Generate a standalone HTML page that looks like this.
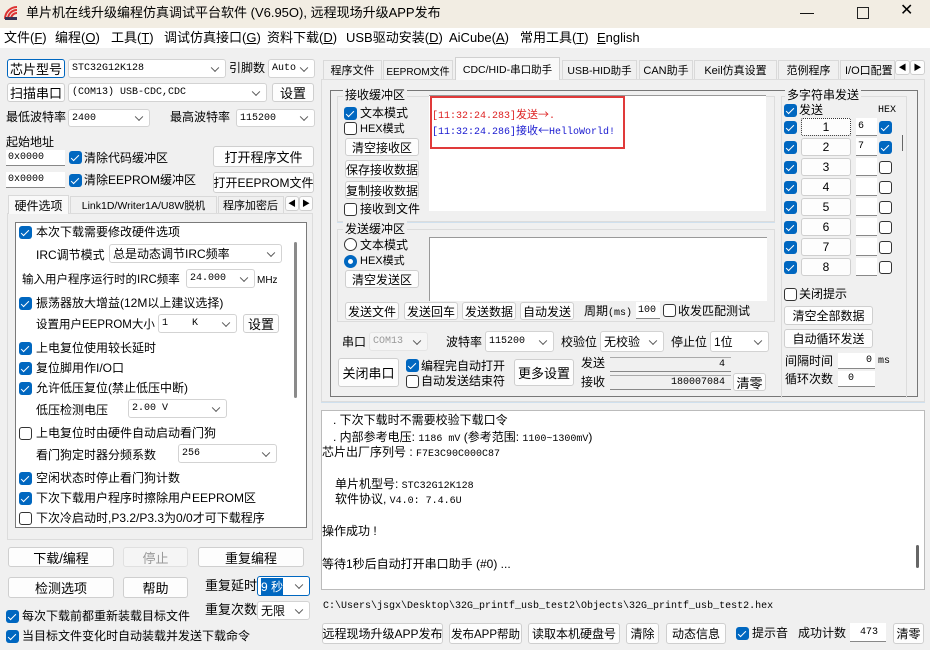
<!DOCTYPE html>
<html><head><meta charset="utf-8"><style>
*{margin:0;padding:0}
body{width:930px;height:650px;overflow:hidden;background:#f0f0f0;font-family:"Liberation Sans","Noto Sans CJK SC",sans-serif;font-size:12px;color:#000;position:relative}
.a{position:absolute}
.t{position:absolute;white-space:nowrap;line-height:16px}
.m{font-family:"Liberation Mono","Noto Sans CJK SC",monospace;font-size:10px}
.b{position:absolute;background:#fdfdfd;border:1px solid #cfcfcf;border-radius:3px;box-sizing:border-box;display:flex;align-items:center;justify-content:center;white-space:nowrap;overflow:hidden}
.s{position:absolute;background:#fff;border:1px solid #d3d3d3;border-radius:3px;box-sizing:border-box;padding-left:3px;display:flex;align-items:center;white-space:nowrap}
.s::after{content:"";position:absolute;right:7px;top:50%;width:5px;height:5px;border-right:1px solid #555;border-bottom:1px solid #555;transform:translateY(-70%) rotate(45deg)}
.i{position:absolute;background:#fff;border-bottom:1px solid #888;box-sizing:border-box;display:flex;align-items:center;white-space:nowrap;padding-left:2px}
.c{position:absolute;width:13px;height:13px;background:#0067c0;border-radius:3px;box-sizing:border-box}
.c::after{content:"";position:absolute;left:4px;top:1.5px;width:3px;height:7px;border-right:1.5px solid #fff;border-bottom:1.5px solid #fff;transform:rotate(45deg)}
.u{position:absolute;width:13px;height:13px;background:#fff;border:1px solid #333;border-radius:3px;box-sizing:border-box}
.r{position:absolute;width:13px;height:13px;background:#fff;border:1px solid #333;border-radius:50%;box-sizing:border-box}
.rc{position:absolute;width:13px;height:13px;background:#fff;border:4px solid #0067c0;border-radius:50%;box-sizing:border-box}
.g{position:absolute;border:1px solid #dcdcdc;box-sizing:border-box}
.tab{position:absolute;border:1px solid #d9d9d9;border-bottom:none;background:#f0f0f0;box-sizing:border-box;display:flex;align-items:center;justify-content:center;white-space:nowrap;font-size:11px}
.w{position:absolute;background:#fff}
</style></head><body>
<!-- title -->
<div class="a" style="left:0;top:0;width:930px;height:28px;background:#f2ede3"></div>
<svg class="a" style="left:3px;top:5px" width="16" height="16" viewBox="0 0 16 16"><path d="M2 14 A12 12 0 0 1 14 2" stroke="#d33" stroke-width="2" fill="none"/><path d="M5 14 A9 9 0 0 1 14 5" stroke="#d33" stroke-width="2" fill="none"/><path d="M8 14 A6 6 0 0 1 14 8" stroke="#d33" stroke-width="2" fill="none"/><rect x="2" y="12" width="12" height="3" fill="#335"/></svg>
<div class="t" style="left:26px;top:5px;font-size:13px">单片机在线升级编程仿真调试平台软件 (V6.95O), 远程现场升级APP发布</div>
<div class="t" style="left:800px;top:4px;font-size:14px">—</div>
<div class="a" style="left:857px;top:7px;width:10px;height:10px;border:1px solid #222"></div>
<div class="t" style="left:900px;top:3px;font-size:16px">✕</div>
<!-- menu -->
<div class="a" style="left:0;top:28px;width:930px;height:20px;background:#fff"></div>
<div class="t" style="left:4px;top:30px;font-size:13px">文件(<u>F</u>)</div>
<div class="t" style="left:55px;top:30px;font-size:13px">编程(<u>O</u>)</div>
<div class="t" style="left:111px;top:30px;font-size:13px">工具(<u>T</u>)</div>
<div class="t" style="left:164px;top:30px;font-size:13px">调试仿真接口(<u>G</u>)</div>
<div class="t" style="left:267px;top:30px;font-size:13px">资料下载(<u>D</u>)</div>
<div class="t" style="left:346px;top:30px;font-size:13px">USB驱动安装(<u>D</u>)</div>
<div class="t" style="left:449px;top:30px;font-size:13px">AiCube(<u>A</u>)</div>
<div class="t" style="left:520px;top:30px;font-size:13px">常用工具(<u>T</u>)</div>
<div class="t" style="left:597px;top:30px;font-size:13px"><u>E</u>nglish</div>

<!-- left top -->
<div class="b" style="left:7px;top:59px;width:58px;height:19px;border-color:#0067c0;font-size:13px">芯片型号</div>
<div class="s m" style="left:68px;top:59px;width:158px;height:19px">STC32G12K128</div>
<div class="t" style="left:229px;top:60px;font-size:12px">引脚数</div>
<div class="s m" style="left:268px;top:59px;width:47px;height:19px">Auto</div>
<div class="b" style="left:7px;top:83px;width:58px;height:19px;font-size:13px">扫描串口</div>
<div class="s m" style="left:68px;top:83px;width:199px;height:19px">(COM13) USB-CDC,CDC</div>
<div class="b" style="left:272px;top:83px;width:42px;height:19px;font-size:13px">设置</div>
<div class="t" style="left:6px;top:109px">最低波特率</div>
<div class="s m" style="left:68px;top:109px;width:82px;height:18px">2400</div>
<div class="t" style="left:170px;top:109px">最高波特率</div>
<div class="s m" style="left:236px;top:109px;width:79px;height:18px">115200</div>
<div class="t" style="left:6px;top:134px">起始地址</div>
<div class="i m" style="left:6px;top:150px;width:59px;height:16px">0x0000</div>
<div class="c" style="left:69px;top:151px"></div>
<div class="t" style="left:84px;top:150px">清除代码缓冲区</div>
<div class="b" style="left:213px;top:146px;width:101px;height:21px;font-size:13px">打开程序文件</div>
<div class="i m" style="left:6px;top:172px;width:59px;height:16px">0x0000</div>
<div class="c" style="left:69px;top:174px"></div>
<div class="t" style="left:84px;top:172px">清除EEPROM缓冲区</div>
<div class="b" style="left:213px;top:172px;width:101px;height:21px;font-size:12px">打开EEPROM文件</div>
<!-- left tabs -->
<div class="a" style="left:7px;top:213px;width:306px;height:327px;border:1px solid #dcdcdc;box-sizing:border-box;background:#f0f0f0"></div>
<div class="tab" style="left:8px;top:195px;width:61px;height:19px;background:#f9f9f9;font-size:12px">硬件选项</div>
<div class="tab" style="left:70px;top:196px;width:147px;height:17px;font-size:10.5px">Link1D/Writer1A/U8W脱机</div>
<div class="tab" style="left:218px;top:196px;width:66px;height:17px;overflow:hidden;justify-content:flex-start;padding-left:4px">程序加密后</div>
<div class="b" style="left:285px;top:196px;width:14px;height:15px;font-size:8px">◀</div>
<div class="b" style="left:299px;top:196px;width:14px;height:15px;font-size:8px">▶</div>
<div class="w" style="left:15px;top:222px;width:292px;height:306px;border:1px solid #7a7a7a;box-sizing:border-box"></div>
<div class="a" style="left:294px;top:242px;width:3px;height:156px;background:#8a8a8a;border-radius:2px"></div>
<div class="c" style="left:19px;top:226px"></div><div class="t" style="left:36px;top:224px">本次下载需要修改硬件选项</div>
<div class="t" style="left:36px;top:247px">IRC调节模式</div>
<div class="s" style="left:109px;top:244px;width:173px;height:19px">总是动态调节IRC频率</div>
<div class="t" style="left:22px;top:272px;font-size:11.5px">输入用户程序运行时的IRC频率</div>
<div class="s m" style="left:186px;top:269px;width:69px;height:19px">24.000</div>
<div class="t" style="left:257px;top:273px;font-size:10px">MHz</div>
<div class="c" style="left:19px;top:297px"></div><div class="t" style="left:36px;top:295px">振荡器放大增益(12M以上建议选择)</div>
<div class="t" style="left:36px;top:317px;font-size:11.5px">设置用户EEPROM大小</div>
<div class="s m" style="left:158px;top:314px;width:79px;height:19px">1&nbsp;&nbsp;&nbsp;&nbsp;K</div>
<div class="b" style="left:243px;top:314px;width:36px;height:19px;font-size:13px">设置</div>
<div class="c" style="left:19px;top:342px"></div><div class="t" style="left:36px;top:340px">上电复位使用较长延时</div>
<div class="c" style="left:19px;top:362px"></div><div class="t" style="left:36px;top:360px">复位脚用作I/O口</div>
<div class="c" style="left:19px;top:382px"></div><div class="t" style="left:36px;top:380px">允许低压复位(禁止低压中断)</div>
<div class="t" style="left:36px;top:402px">低压检测电压</div>
<div class="s m" style="left:128px;top:399px;width:99px;height:19px">2.00 V</div>
<div class="u" style="left:19px;top:427px"></div><div class="t" style="left:36px;top:425px">上电复位时由硬件自动启动看门狗</div>
<div class="t" style="left:36px;top:447px">看门狗定时器分频系数</div>
<div class="s m" style="left:178px;top:444px;width:99px;height:19px">256</div>
<div class="c" style="left:19px;top:472px"></div><div class="t" style="left:36px;top:470px">空闲状态时停止看门狗计数</div>
<div class="c" style="left:19px;top:492px"></div><div class="t" style="left:36px;top:490px">下次下载用户程序时擦除用户EEPROM区</div>
<div class="u" style="left:19px;top:512px"></div><div class="t" style="left:36px;top:510px">下次冷启动时,P3.2/P3.3为0/0才可下载程序</div>
<!-- left bottom -->
<div class="b" style="left:8px;top:547px;width:106px;height:20px;font-size:13px">下载/编程</div>
<div class="b" style="left:123px;top:547px;width:65px;height:20px;font-size:13px;color:#999;background:#f5f5f5;border-color:#e0e0e0">停止</div>
<div class="b" style="left:198px;top:547px;width:106px;height:20px;font-size:13px">重复编程</div>
<div class="b" style="left:8px;top:577px;width:106px;height:21px;font-size:13px">检测选项</div>
<div class="b" style="left:123px;top:577px;width:65px;height:21px;font-size:13px">帮助</div>
<div class="t" style="left:205px;top:578px;font-size:13px">重复延时</div>
<div class="s" style="left:257px;top:576px;width:53px;height:20px;border-color:#0067c0"><span style="background:#0067c0;color:#fff">9 秒</span></div>
<div class="t" style="left:205px;top:602px;font-size:13px">重复次数</div>
<div class="s" style="left:257px;top:601px;width:53px;height:19px">无限</div>
<div class="c" style="left:6px;top:610px"></div><div class="t" style="left:22px;top:608px">每次下载前都重新装载目标文件</div>
<div class="c" style="left:6px;top:630px"></div><div class="t" style="left:22px;top:628px">当目标文件变化时自动装载并发送下载命令</div>

<!-- right tabs -->
<div class="a" style="left:321px;top:79px;width:604px;height:323px;border:1px solid #dcdcdc;box-sizing:border-box"></div>
<div class="tab" style="left:323px;top:60px;width:59px;height:19px">程序文件</div>
<div class="tab" style="left:383px;top:60px;width:70px;height:19px;font-size:10px">EEPROM文件</div>
<div class="tab" style="left:455px;top:57px;width:105px;height:23px;background:#f9f9f9;font-size:10.5px;border-color:#d0d0d0">CDC/HID-串口助手</div>
<div class="tab" style="left:562px;top:60px;width:75px;height:19px;font-size:10.5px">USB-HID助手</div>
<div class="tab" style="left:639px;top:60px;width:54px;height:19px">CAN助手</div>
<div class="tab" style="left:694px;top:60px;width:83px;height:19px">Keil仿真设置</div>
<div class="tab" style="left:778px;top:60px;width:61px;height:19px">范例程序</div>
<div class="tab" style="left:840px;top:60px;width:55px;height:19px;overflow:hidden;justify-content:flex-start;padding-left:4px">I/O口配置</div>
<div class="b" style="left:895px;top:60px;width:15px;height:15px;font-size:8px">◀</div>
<div class="b" style="left:910px;top:60px;width:15px;height:15px;font-size:8px">▶</div>
<div class="a" style="left:330px;top:90px;width:588px;height:307px;border:1px solid #777;box-sizing:border-box"></div>
<!-- receive group -->
<div class="g" style="left:337px;top:96px;width:438px;height:126px"></div>
<div class="t" style="left:343px;top:87px;background:#f0f0f0;padding:0 2px">接收缓冲区</div>
<div class="c" style="left:344px;top:107px"></div><div class="t" style="left:360px;top:105px">文本模式</div>
<div class="u" style="left:344px;top:122px"></div><div class="t" style="left:360px;top:121px;font-size:11px">HEX模式</div>
<div class="b" style="left:345px;top:138px;width:74px;height:18px">清空接收区</div>
<div class="b" style="left:345px;top:160px;width:74px;height:18px">保存接收数据</div>
<div class="b" style="left:345px;top:181px;width:74px;height:18px">复制接收数据</div>
<div class="u" style="left:344px;top:203px"></div><div class="t" style="left:360px;top:201px">接收到文件</div>
<div class="w" style="left:429px;top:95px;width:337px;height:115px;border-top:1px solid #999"></div>
<div class="a" style="left:430px;top:96px;width:195px;height:53px;border:2px solid #e03a3a;box-sizing:border-box"></div>
<div class="t m" style="left:432px;top:106px;color:#d22">[11:32:24.283]<span style="font-family:'Noto Sans CJK SC';font-size:11px">发送→</span>.</div>
<div class="t m" style="left:432px;top:122px;color:#1a1ad0">[11:32:24.286]<span style="font-family:'Noto Sans CJK SC';font-size:11px">接收←</span>HelloWorld!</div>
<!-- send group -->
<div class="a" style="left:337px;top:222px;width:438px;height:1px;background:#cfe0ee"></div>
<div class="g" style="left:337px;top:229px;width:438px;height:93px"></div>
<div class="t" style="left:343px;top:221px;background:#f0f0f0;padding:0 2px">发送缓冲区</div>
<div class="r" style="left:344px;top:238px"></div><div class="t" style="left:360px;top:237px">文本模式</div>
<div class="rc" style="left:344px;top:255px"></div><div class="t" style="left:360px;top:253px;font-size:11px">HEX模式</div>
<div class="b" style="left:345px;top:270px;width:74px;height:18px">清空发送区</div>
<div class="w" style="left:429px;top:237px;width:337px;height:63px;border-top:1px solid #999;border-left:1px solid #999"></div>
<div class="b" style="left:345px;top:302px;width:54px;height:18px">发送文件</div>
<div class="b" style="left:404px;top:302px;width:54px;height:18px">发送回车</div>
<div class="b" style="left:462px;top:302px;width:54px;height:18px">发送数据</div>
<div class="b" style="left:520px;top:302px;width:54px;height:18px">自动发送</div>
<div class="t" style="left:584px;top:303px">周期<span class="m">(ms)</span></div>
<div class="i m" style="left:636px;top:302px;width:24px;height:17px">100</div>
<div class="u" style="left:663px;top:304px"></div><div class="t" style="left:678px;top:303px">收发匹配测试</div>
<!-- serial row -->
<div class="t" style="left:342px;top:334px">串口</div>
<div class="s m" style="left:369px;top:332px;width:59px;height:19px;color:#999;background:#f5f5f5;border-color:#e5e5e5">COM13</div>
<div class="t" style="left:446px;top:334px">波特率</div>
<div class="s m" style="left:485px;top:331px;width:69px;height:21px">115200</div>
<div class="t" style="left:561px;top:334px">校验位</div>
<div class="s" style="left:600px;top:331px;width:64px;height:21px">无校验</div>
<div class="t" style="left:671px;top:334px">停止位</div>
<div class="s" style="left:710px;top:331px;width:59px;height:21px">1位</div>
<div class="b" style="left:338px;top:358px;width:61px;height:29px;font-size:13px">关闭串口</div>
<div class="c" style="left:406px;top:359px"></div><div class="t" style="left:421px;top:358px">编程完自动打开</div>
<div class="u" style="left:406px;top:375px"></div><div class="t" style="left:421px;top:373px">自动发送结束符</div>
<div class="b" style="left:514px;top:359px;width:60px;height:27px;font-size:13px">更多设置</div>
<div class="t" style="left:581px;top:355px">发送</div>
<div class="i m" style="left:610px;top:357px;width:121px;height:15px;justify-content:flex-end;padding-right:6px;background:#f0f0f0;border-top:1px solid #aaa">4</div>
<div class="t" style="left:581px;top:374px">接收</div>
<div class="i m" style="left:610px;top:375px;width:121px;height:15px;justify-content:flex-end;padding-right:6px;background:#f0f0f0;border-top:1px solid #aaa">180007084</div>
<div class="b" style="left:733px;top:373px;width:33px;height:18px;font-size:13px">清零</div>
<!-- multi -->
<div class="g" style="left:781px;top:96px;width:126px;height:302px;border-bottom:none"></div>
<div class="t" style="left:785px;top:87px;background:#f0f0f0;padding:0 2px">多字符串发送</div>
<div class="c" style="left:784px;top:104px"></div><div class="t" style="left:799px;top:102px">发送</div>
<div class="t m" style="left:878px;top:103px;font-size:10px">HEX</div>

<div class="c" style="left:784px;top:121px"></div><div class="b" style="left:801px;top:118px;width:50px;height:18px;border:1px dotted #333;border-radius:2px">1</div><div class="i m" style="left:856px;top:118px;width:21px;height:18px">6</div><div class="c" style="left:879px;top:121px"></div>
<div class="c" style="left:784px;top:141px"></div><div class="b" style="left:801px;top:138px;width:50px;height:18px">2</div><div class="i m" style="left:856px;top:138px;width:21px;height:18px">7</div><div class="c" style="left:879px;top:141px"></div>
<div class="c" style="left:784px;top:161px"></div><div class="b" style="left:801px;top:158px;width:50px;height:18px">3</div><div class="i" style="left:856px;top:158px;width:21px;height:18px"></div><div class="u" style="left:879px;top:161px"></div>
<div class="c" style="left:784px;top:181px"></div><div class="b" style="left:801px;top:178px;width:50px;height:18px">4</div><div class="i" style="left:856px;top:178px;width:21px;height:18px"></div><div class="u" style="left:879px;top:181px"></div>
<div class="c" style="left:784px;top:201px"></div><div class="b" style="left:801px;top:198px;width:50px;height:18px">5</div><div class="i" style="left:856px;top:198px;width:21px;height:18px"></div><div class="u" style="left:879px;top:201px"></div>
<div class="c" style="left:784px;top:221px"></div><div class="b" style="left:801px;top:218px;width:50px;height:18px">6</div><div class="i" style="left:856px;top:218px;width:21px;height:18px"></div><div class="u" style="left:879px;top:221px"></div>
<div class="c" style="left:784px;top:241px"></div><div class="b" style="left:801px;top:238px;width:50px;height:18px">7</div><div class="i" style="left:856px;top:238px;width:21px;height:18px"></div><div class="u" style="left:879px;top:241px"></div>
<div class="c" style="left:784px;top:261px"></div><div class="b" style="left:801px;top:258px;width:50px;height:18px">8</div><div class="i" style="left:856px;top:258px;width:21px;height:18px"></div><div class="u" style="left:879px;top:261px"></div>
<div class="a" style="left:902px;top:135px;width:1px;height:16px;background:#666"></div>
<div class="u" style="left:784px;top:288px"></div><div class="t" style="left:799px;top:286px">关闭提示</div>
<div class="b" style="left:784px;top:306px;width:89px;height:19px">清空全部数据</div>
<div class="b" style="left:784px;top:329px;width:89px;height:19px">自动循环发送</div>
<div class="t" style="left:785px;top:353px">间隔时间</div>
<div class="i m" style="left:838px;top:353px;width:37px;height:16px;justify-content:flex-end;padding-right:3px">0</div>
<div class="t m" style="left:878px;top:354px;font-size:10px">ms</div>
<div class="t" style="left:785px;top:371px">循环次数</div>
<div class="i m" style="left:838px;top:371px;width:37px;height:16px;padding-left:10px">0</div>
<div class="a" style="left:321px;top:402px;width:604px;height:1px;background:#cfe0ee"></div>
<!-- log -->
<div class="w" style="left:321px;top:410px;width:604px;height:180px;border:1px solid #bbb;box-sizing:border-box"></div>
<div class="a" style="left:916px;top:545px;width:3px;height:23px;background:#666;border-radius:2px"></div>
<div class="t" style="left:333px;top:412px">. 下次下载时不需要校验下载口令</div>
<div class="t" style="left:333px;top:429px">. 内部参考电压: <span class="m">1186 mV</span> (参考范围: <span class="m">1100~1300mV</span>)</div>
<div class="t" style="left:322px;top:444px">芯片出厂序列号 : <span class="m">F7E3C90C000C87</span></div>
<div class="t" style="left:335px;top:476px">单片机型号: <span class="m">STC32G12K128</span></div>
<div class="t" style="left:335px;top:491px">软件协议, <span class="m">V4.0: 7.4.6U</span></div>
<div class="t" style="left:322px;top:523px">操作成功 !</div>
<div class="t" style="left:322px;top:556px">等待1秒后自动打开串口助手 (#0) ...</div>
<div class="i m" style="left:321px;top:598px;width:604px;height:17px;background:#f0f0f0;border:none">C:\Users\jsgx\Desktop\32G_printf_usb_test2\Objects\32G_printf_usb_test2.hex</div>
<div class="b" style="left:322px;top:623px;width:121px;height:21px">远程现场升级APP发布</div>
<div class="b" style="left:449px;top:623px;width:73px;height:21px;font-size:11.5px">发布APP帮助</div>
<div class="b" style="left:528px;top:623px;width:92px;height:21px">读取本机硬盘号</div>
<div class="b" style="left:626px;top:623px;width:33px;height:21px">清除</div>
<div class="b" style="left:666px;top:623px;width:60px;height:21px">动态信息</div>
<div class="c" style="left:736px;top:627px"></div><div class="t" style="left:752px;top:625px">提示音</div>
<div class="t" style="left:798px;top:625px">成功计数</div>
<div class="i m" style="left:850px;top:623px;width:36px;height:19px;justify-content:center">473</div>
<div class="b" style="left:893px;top:623px;width:31px;height:21px">清零</div>
</body></html>
